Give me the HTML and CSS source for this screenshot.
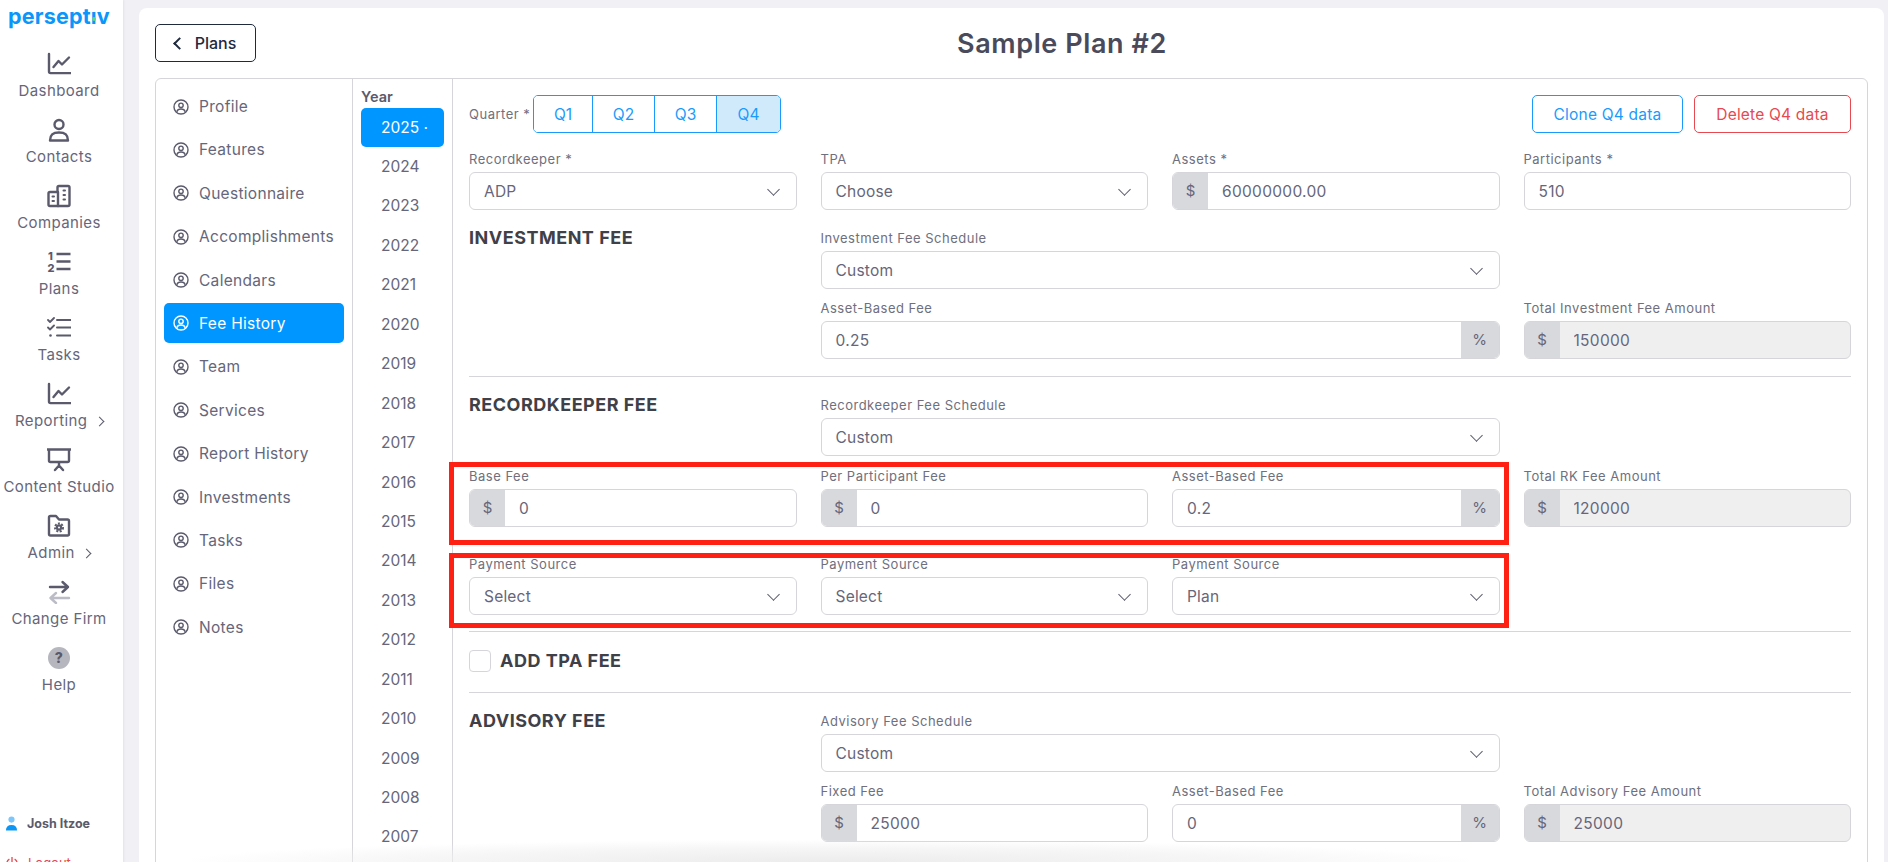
FILE: index.html
```html
<!DOCTYPE html>
<html>
<head>
    <title>Sample Plan #2</title>
    <link rel="stylesheet" href="styles.css">
</head>
<body>
    <svg class="defs" width="0" height="0">
        <symbol id="i-chart" viewBox="0 0 24 24"><path d="M2 2v17.500c0 1 .6 1.600 1.600 1.600H23.500"/><path d="M6.500 15l5-6 3.500 3.500L22 5.500" stroke-width="2.400"/></symbol>
        <symbol id="i-profile" viewBox="0 0 16 16"><circle cx="8" cy="8" r="7"/><circle cx="8" cy="6.300" r="2.200"/><path d="M3.800 12.700c.6-2 2.200-2.700 4.200-2.700s3.600.7 4.200 2.700"/></symbol>
    </svg>

    <div class="app">
        <nav class="sidebar">
            <div class="logo">persept<span class="logo-i">ı</span>v</div>

            <a class="nav-item">
                <svg class="nav-icon"><use href="#i-chart"/></svg>
                <span>Dashboard</span>
            </a>
            <a class="nav-item">
                <svg class="nav-icon" viewBox="0 0 24 24"><circle cx="12" cy="6.500" r="4.500"/><path d="M3 22.500c0-6 3-8 9-8s9 2 9 8z"/></svg>
                <span>Contacts</span>
            </a>
            <a class="nav-item">
                <svg class="nav-icon" viewBox="0 0 24 24"><path d="M10.500 8H3C2 8 1.500 8.600 1.500 9.500v11c0 1 .5 1.500 1.500 1.500h18c1 0 1.500-.5 1.500-1.500v-17C22.500 2.500 22 2 21 2h-9c-1 0-1.500.5-1.500 1.500z"/><path d="M11 8v14"/><path class="dots" d="M5.500 12.500h1.500M5.500 17h1.500M16.500 6.500h1.500M16.500 11h1.500M16.500 15.500h1.500"/></svg>
                <span>Companies</span>
            </a>
            <a class="nav-item">
                <svg class="nav-icon" viewBox="0 0 24 24"><text class="icon-num" x="1" y="9.500">1</text><text class="icon-num" x="0.500" y="21.500">2</text><path class="thick" d="M9.500 4h14M9.500 11.500h14M9.500 19h14"/></svg>
                <span>Plans</span>
            </a>
            <a class="nav-item">
                <svg class="nav-icon" viewBox="0 0 24 24"><path d="M1 4l2 2 4-4M1 11.500l2 2 4-4" stroke-width="1.800"/><circle class="solid" cx="3.500" cy="19.500" r="1.300"/><path stroke-width="2" d="M10 4h13.500M10 11.500h13.500M10 19.500h13.500"/></svg>
                <span>Tasks</span>
            </a>
            <a class="nav-item">
                <svg class="nav-icon"><use href="#i-chart"/></svg>
                <span>Reporting <i class="chev"></i></span>
            </a>
            <a class="nav-item">
                <svg class="nav-icon" viewBox="0 0 24 24"><path d="M0 1.500h24M2 2v10.500c0 1 .6 1.500 1.500 1.500h17c1 0 1.500-.5 1.500-1.500V2M12 14v3.500M8 22l4-4.500 4 4.500"/></svg>
                <span>Content Studio</span>
            </a>
            <a class="nav-item">
                <svg class="nav-icon" viewBox="0 0 24 24"><path d="M2 3.500c0-1 .6-1.500 1.500-1.500H9l3 3.500h8.500c1 0 1.500.6 1.500 1.500v13c0 1-.6 1.500-1.500 1.500h-17c-1 0-1.500-.6-1.500-1.500z"/><circle class="gear" cx="12" cy="13.500" r="3.300"/><circle class="solid" cx="12" cy="13.500" r="3.200"/><circle class="hole" cx="12" cy="13.500" r="1"/></svg>
                <span>Admin <i class="chev"></i></span>
            </a>
            <a class="nav-item">
                <svg class="nav-icon" viewBox="0 0 24 24"><path stroke-width="2.400" d="M3 7h18M15.500 2l5.500 5-5.500 5"/><path class="faded" stroke-width="2.400" d="M22 18H4M9 13l-5.500 5L9 23"/></svg>
                <span>Change Firm</span>
            </a>
            <a class="nav-item">
                <span class="help-icon">?</span>
                <span>Help</span>
            </a>

            <div class="side-foot">
                <div class="user">
                    <svg class="user-icon" viewBox="0 0 14 16"><circle cx="7" cy="3.800" r="3.300" fill="#7cc6fb"/><path d="M1 15.500c0-4 2-6 6-6s6 2 6 6z" fill="#0b96f5"/></svg>
                    Josh Itzoe
                </div>
                <div class="logout">
                    <svg class="logout-icon" viewBox="0 0 16 16"><path d="M5 3.500a6 6 0 1 0 6 0M8 1v6"/></svg>
                    Logout
                </div>
            </div>
        </nav>

        <main class="main">
            <div class="topbar">
                <button class="back-btn"><i class="chev-left"></i>Plans</button>
                <h1>Sample Plan #2</h1>
            </div>

            <div class="panel">
                <ul class="menu">
                    <li><svg class="menu-icon"><use href="#i-profile"/></svg>Profile</li>
                    <li><svg class="menu-icon"><use href="#i-profile"/></svg>Features</li>
                    <li><svg class="menu-icon"><use href="#i-profile"/></svg>Questionnaire</li>
                    <li><svg class="menu-icon"><use href="#i-profile"/></svg>Accomplishments</li>
                    <li><svg class="menu-icon"><use href="#i-profile"/></svg>Calendars</li>
                    <li class="active"><svg class="menu-icon"><use href="#i-profile"/></svg>Fee History</li>
                    <li><svg class="menu-icon"><use href="#i-profile"/></svg>Team</li>
                    <li><svg class="menu-icon"><use href="#i-profile"/></svg>Services</li>
                    <li><svg class="menu-icon"><use href="#i-profile"/></svg>Report History</li>
                    <li><svg class="menu-icon"><use href="#i-profile"/></svg>Investments</li>
                    <li><svg class="menu-icon"><use href="#i-profile"/></svg>Tasks</li>
                    <li><svg class="menu-icon"><use href="#i-profile"/></svg>Files</li>
                    <li><svg class="menu-icon"><use href="#i-profile"/></svg>Notes</li>
                </ul>

                <div class="years">
                    <div class="years-title">Year</div>
                    <div class="year active">2025 ·</div>
                    <div class="year">2024</div>
                    <div class="year">2023</div>
                    <div class="year">2022</div>
                    <div class="year">2021</div>
                    <div class="year">2020</div>
                    <div class="year">2019</div>
                    <div class="year">2018</div>
                    <div class="year">2017</div>
                    <div class="year">2016</div>
                    <div class="year">2015</div>
                    <div class="year">2014</div>
                    <div class="year">2013</div>
                    <div class="year">2012</div>
                    <div class="year">2011</div>
                    <div class="year">2010</div>
                    <div class="year">2009</div>
                    <div class="year">2008</div>
                    <div class="year">2007</div>
                </div>

                <div class="content">
                    <div class="quarter-row">
                        <span class="quarter-label">Quarter *</span>
                        <div class="q-group">
                            <button>Q1</button>
                            <button>Q2</button>
                            <button>Q3</button>
                            <button class="active">Q4</button>
                        </div>
                        <button class="btn-clone">Clone Q4 data</button>
                        <button class="btn-delete">Delete Q4 data</button>
                    </div>

                    <div class="grid">
                        <div class="field">
                            <label>Recordkeeper *</label>
                            <div class="select"><select><option>ADP</option></select></div>
                        </div>
                        <div class="field">
                            <label>TPA</label>
                            <div class="select"><select><option>Choose</option></select></div>
                        </div>
                        <div class="field">
                            <label>Assets *</label>
                            <div class="group"><span class="addon">$</span><input value="60000000.00"></div>
                        </div>
                        <div class="field">
                            <label>Participants *</label>
                            <div class="group"><input value="510"></div>
                        </div>
                    </div>

                    <section class="fee-section first snug">
                        <h2>INVESTMENT FEE</h2>
                        <div class="field span-2">
                            <label>Investment Fee Schedule</label>
                            <div class="select"><select><option>Custom</option></select></div>
                        </div>
                        <div class="field col-2 wide">
                            <label>Asset-Based Fee</label>
                            <div class="group"><input value="0.25"><span class="addon right">%</span></div>
                        </div>
                        <div class="field">
                            <label>Total Investment Fee Amount</label>
                            <div class="group disabled"><span class="addon">$</span><input value="150000" disabled></div>
                        </div>
                    </section>

                    <hr>

                    <section class="fee-section">
                        <h2>RECORDKEEPER FEE</h2>
                        <div class="field span-2">
                            <label>Recordkeeper Fee Schedule</label>
                            <div class="select"><select><option>Custom</option></select></div>
                        </div>

                        <div class="marked-row mark-one">
                            <div class="field">
                                <label>Base Fee</label>
                                <div class="group"><span class="addon">$</span><input value="0"></div>
                            </div>
                            <div class="field">
                                <label>Per Participant Fee</label>
                                <div class="group"><span class="addon">$</span><input value="0"></div>
                            </div>
                            <div class="field">
                                <label>Asset-Based Fee</label>
                                <div class="group"><input value="0.2"><span class="addon right">%</span></div>
                            </div>
                        </div>
                        <div class="field">
                            <label>Total RK Fee Amount</label>
                            <div class="group disabled"><span class="addon">$</span><input value="120000" disabled></div>
                        </div>

                        <div class="marked-row mark-two">
                            <div class="field">
                                <label>Payment Source</label>
                                <div class="select"><select><option>Select</option></select></div>
                            </div>
                            <div class="field">
                                <label>Payment Source</label>
                                <div class="select"><select><option>Select</option></select></div>
                            </div>
                            <div class="field">
                                <label>Payment Source</label>
                                <div class="select"><select><option>Plan</option></select></div>
                            </div>
                        </div>
                    </section>

                    <hr class="tight">

                    <div class="tpa-row">
                        <input type="checkbox">
                        <h2>ADD TPA FEE</h2>
                    </div>

                    <hr class="flush">

                    <section class="fee-section snug">
                        <h2>ADVISORY FEE</h2>
                        <div class="field span-2">
                            <label>Advisory Fee Schedule</label>
                            <div class="select"><select><option>Custom</option></select></div>
                        </div>
                        <div class="field col-2">
                            <label>Fixed Fee</label>
                            <div class="group"><span class="addon">$</span><input value="25000"></div>
                        </div>
                        <div class="field">
                            <label>Asset-Based Fee</label>
                            <div class="group"><input value="0"><span class="addon right">%</span></div>
                        </div>
                        <div class="field">
                            <label>Total Advisory Fee Amount</label>
                            <div class="group disabled"><span class="addon">$</span><input value="25000" disabled></div>
                        </div>
                    </section>
                </div>
            </div>
        </main>

        <div class="bottom-fade"></div>
    </div>
</body>
</html>
```

FILE: styles.css
```css
* {
    box-sizing: border-box;
}

html, body {
    margin: 0;
    height: 862px;
    overflow: hidden;
}

body {
    font-family: 'Inter', 'Liberation Sans', sans-serif;
    color: #5c5c6b;
    background-color: #f1f1f5;
}

.defs {
    position: absolute;
}

.app {
    position: relative;
    display: flex;
    align-items: flex-start;
    height: 862px;
    overflow: hidden;
}

/* Left navigation */
.sidebar {
    display: flex;
    flex-direction: column;
    align-items: center;
    flex: 0 0 123px;
    height: 871px;
    padding-right: 5px;
    background-color: #fff;
    box-shadow: 1px 0 2px rgba(0, 0, 0, 0.06);
}

.logo {
    align-self: flex-start;
    height: 52px;
    padding-left: 8px;
    font-size: 21.5px;
    font-weight: 700;
    line-height: 32px;
    letter-spacing: 0.2px;
    color: #0a96fb;
}

.logo-i {
    position: relative;
}

.logo-i::after {
    content: "";
    position: absolute;
    left: 1.5px;
    top: 14px;
    width: 4px;
    height: 4px;
    border-radius: 50%;
    background-color: #56d98a;
}

.nav-item {
    display: flex;
    flex-direction: column;
    align-items: center;
    height: 66px;
    font-size: 15px;
    line-height: 20px;
    letter-spacing: 0.4px;
    white-space: nowrap;
    color: #66667a;
}

.nav-icon {
    display: block;
    width: 24px;
    height: 24px;
    margin-bottom: 5px;
    fill: none;
    stroke: #5a5a6c;
    stroke-width: 2.4;
    stroke-linecap: round;
    stroke-linejoin: round;
}

.nav-icon .dots {
    stroke-width: 2;
}

.nav-icon .thick {
    stroke-width: 2.6;
    stroke-linecap: butt;
}

.nav-icon .solid {
    fill: #5a5a6c;
    stroke: none;
}

.nav-icon .gear {
    stroke-width: 2;
    stroke-dasharray: 2 1.45;
    stroke-linecap: butt;
    r: 4;
}

.nav-icon .hole {
    fill: #fff;
    stroke: none;
}

.nav-icon .faded {
    stroke: #bcbcc6;
}

.icon-num {
    font-size: 11px;
    font-weight: 800;
    fill: #5a5a6c;
    stroke: none;
}

.chev {
    display: inline-block;
    width: 7px;
    height: 7px;
    margin-left: 4px;
    margin-bottom: 1px;
    border-top: 1.5px solid #5a5a6c;
    border-right: 1.5px solid #5a5a6c;
    transform: rotate(45deg);
}

.help-icon {
    display: block;
    width: 22px;
    height: 22px;
    margin: 1px 0 6px;
    border-radius: 50%;
    background-color: #b6b6bf;
    color: #5a5a6c;
    font-size: 14px;
    font-weight: 800;
    line-height: 22px;
    text-align: center;
}

.side-foot {
    align-self: stretch;
    margin-top: auto;
    padding-left: 5px;
}

.user {
    display: flex;
    align-items: center;
    gap: 9px;
    font-size: 12.5px;
    font-weight: 700;
    color: #5a5a6c;
}

.user-icon {
    width: 13px;
    height: 15px;
}

.logout {
    display: flex;
    align-items: center;
    gap: 9px;
    margin-top: 24px;
    height: 16px;
    font-size: 13px;
    color: #e8484f;
}

.logout-icon {
    width: 14px;
    height: 14px;
    fill: none;
    stroke: #e8484f;
    stroke-width: 1.5;
}

/* Main card */
.main {
    flex: 1;
    min-width: 0;
    margin: 8px 4px 0 16px;
    padding: 16px;
    border-radius: 8px 8px 0 0;
    background-color: #fff;
}

.topbar {
    display: flex;
    align-items: center;
    height: 38px;
}

.topbar h1 {
    flex: 1;
    margin: 0;
    font-size: 27px;
    font-weight: 600;
    letter-spacing: 0.6px;
    text-align: center;
    color: #4a4a5a;
}

.back-btn {
    display: flex;
    align-items: center;
    justify-content: center;
    width: 101px;
    height: 38px;
    border: 1px solid #1f2a3c;
    border-radius: 5px;
    background-color: #fff;
    color: #1f2a3c;
    font-family: inherit;
    font-size: 16px;
    font-weight: 500;
}

.chev-left {
    width: 9px;
    height: 9px;
    margin-right: 11px;
    border-left: 2px solid #1f2a3c;
    border-bottom: 2px solid #1f2a3c;
    transform: rotate(45deg);
}

.panel {
    display: flex;
    align-items: stretch;
    margin-top: 16px;
    border: 1px solid #d6d6da;
    border-radius: 6px 6px 0 0;
}

/* Section menu */
.menu {
    flex: 0 0 197px;
    margin: 0;
    padding: 7.5px 8px 0;
    list-style: none;
    border-right: 1px solid #d6d6da;
}

.menu li {
    display: flex;
    align-items: center;
    gap: 10px;
    height: 40px;
    margin-bottom: 3.4px;
    padding-left: 9px;
    border-radius: 5px;
    font-size: 15.5px;
    letter-spacing: 0.3px;
    color: #66667a;
}

.menu li.active {
    background-color: #0096ff;
    color: #fff;
}

.menu-icon {
    flex: none;
    width: 16px;
    height: 16px;
    fill: none;
    stroke: #5a5a6c;
    stroke-width: 1.4;
}

.menu li.active .menu-icon {
    stroke: #fff;
}

/* Year column */
.years {
    flex: 0 0 100px;
    padding: 0 8px;
    border-right: 1px solid #d6d6da;
}

.years-title {
    height: 29px;
    padding-top: 9px;
    font-size: 14.5px;
    font-weight: 600;
    line-height: 18px;
    color: #5a5a6c;
}

.year {
    height: 39.45px;
    padding-left: 20px;
    border-radius: 5px;
    font-size: 15.5px;
    line-height: 39px;
    color: #66667a;
}

.year.active {
    height: 39px;
    background-color: #0096ff;
    color: #fff;
}

/* Form area */
.content {
    flex: 1;
    min-width: 0;
    padding: 16px 16px 60px;
}

.quarter-row {
    display: flex;
    align-items: center;
    height: 38px;
    margin-bottom: 17px;
}

.quarter-label {
    flex: 0 0 64px;
    font-size: 13px;
    letter-spacing: 0.5px;
    white-space: nowrap;
    color: #6f6f7e;
}

.q-group {
    display: grid;
    grid-template-columns: 58px 62px 62px 64px;
    height: 38px;
    margin-right: auto;
    border: 1px solid #1a9bfc;
    border-radius: 5px;
    overflow: hidden;
}

.q-group button {
    border: 0;
    border-left: 1px solid #1a9bfc;
    background-color: #fff;
    color: #1a9bfc;
    font-family: inherit;
    font-size: 15.5px;
}

.q-group button:first-child {
    border-left: 0;
}

.q-group button.active {
    background-color: #d0eafc;
}

.btn-clone, .btn-delete {
    height: 38px;
    border-radius: 5px;
    background-color: #fff;
    font-family: inherit;
    font-size: 15.5px;
    letter-spacing: 0.2px;
}

.btn-clone {
    width: 151px;
    margin-right: 11px;
    border: 1px solid #1a9bfc;
    color: #1a9bfc;
}

.btn-delete {
    width: 157px;
    border: 1px solid #e8484f;
    color: #e8484f;
}

.grid, .fee-section, .marked-row {
    display: grid;
    grid-template-columns: repeat(4, minmax(0, 1fr));
    column-gap: 24px;
}

.fee-section {
    row-gap: 11px;
}

.fee-section.snug {
    row-gap: 10px;
}

.fee-section.first {
    margin-top: 19px;
}

.fee-section h2 {
    grid-column: 1;
}

.span-2 {
    grid-column: span 2;
}

.col-2 {
    grid-column: 2;
}

.col-2.wide {
    grid-column: 2 / span 2;
}

.marked-row {
    position: relative;
    grid-column: 1 / span 3;
    grid-template-columns: repeat(3, minmax(0, 1fr));
}

/* Red call-out frames drawn on top of the rows */
.marked-row::before {
    content: "";
    position: absolute;
    left: -20px;
    right: -9px;
    border: 5px solid #ff2014;
    pointer-events: none;
}

.mark-one::before {
    top: -5px;
    bottom: -18px;
}

.mark-two {
    grid-column: 1 / span 3;
    margin-top: 17px;
}

.mark-two::before {
    top: -2px;
    bottom: -13px;
}

.field label {
    display: block;
    height: 18px;
    margin-bottom: 4px;
    font-size: 13px;
    line-height: 18px;
    letter-spacing: 0.5px;
    white-space: nowrap;
    color: #6f6f7e;
}

.select {
    position: relative;
}

.select select {
    display: block;
    width: 100%;
    height: 38px;
    padding: 0 14px;
    border: 1px solid #d6d6da;
    border-radius: 6px;
    background-color: #fff;
    font-family: inherit;
    font-size: 15.5px;
    letter-spacing: 0.2px;
    color: #66667a;
    appearance: none;
}

.select::after {
    content: "";
    position: absolute;
    right: 19px;
    top: 13px;
    width: 8px;
    height: 8px;
    border-right: 1.5px solid #5a5a6c;
    border-bottom: 1.5px solid #5a5a6c;
    transform: rotate(45deg);
    pointer-events: none;
}

.group {
    display: flex;
    height: 38px;
    border: 1px solid #d6d6da;
    border-radius: 6px;
    overflow: hidden;
    background-color: #fff;
}

.group input {
    flex: 1;
    min-width: 0;
    padding: 0 14px;
    border: 0;
    outline: 0;
    background: transparent;
    font-family: inherit;
    font-size: 15.5px;
    letter-spacing: 0.3px;
    color: #66667a;
}

.group.disabled {
    background-color: #efeff0;
}

.addon {
    flex: 0 0 35px;
    background-color: #d8d9dd;
    font-size: 15px;
    line-height: 36px;
    text-align: center;
    color: #66667a;
}

.addon.right {
    flex-basis: 38px;
}

h2 {
    margin: 0;
    font-size: 18px;
    font-weight: 700;
    line-height: 18px;
    letter-spacing: 0.5px;
    color: #404048;
}

hr {
    height: 1px;
    margin: 17px 0 19px;
    border: 0;
    background-color: #d6d6da;
}

hr.tight {
    margin: 16px 0 18px;
}

hr.flush {
    margin: 20px 0 19px;
}

.tpa-row {
    display: flex;
    align-items: center;
    gap: 9px;
    height: 22px;
}

.tpa-row input {
    width: 22px;
    height: 22px;
    margin: 0;
    border: 1px solid #d6d6da;
    border-radius: 4px;
    background-color: #fff;
    appearance: none;
}

/* Faint shadow of something below the fold */
.bottom-fade {
    position: absolute;
    left: 190px;
    width: 1280px;
    bottom: 0;
    height: 22px;
    background: radial-gradient(ellipse at 50% 100%, #ececec 0%, rgba(240, 240, 240, 0.6) 45%, rgba(255, 255, 255, 0) 72%);
    pointer-events: none;
}
```
